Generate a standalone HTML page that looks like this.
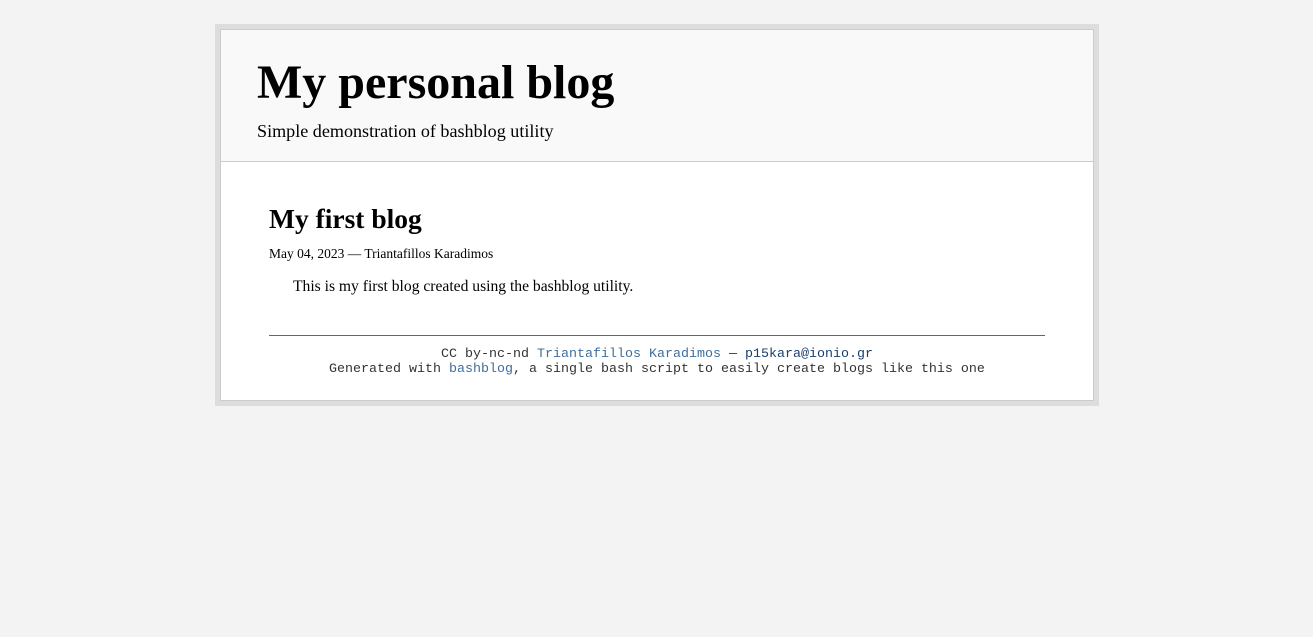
<!DOCTYPE html>
<html><head><style>
html,body{margin:0;padding:0;background:#f3f3f3;}
body{font-family:"Liberation Serif",serif;}
#outer{position:absolute;left:215px;top:24px;width:874px;height:372px;border:5px solid #ddd;background:#fff;}
#inner{position:absolute;left:0;top:0;width:872px;height:370px;border:1px solid #ccc;}
#hdr{height:131px;background:#f9f9f9;border-bottom:1px solid #ccc;position:relative;}
h1{position:absolute;left:36px;top:25px;margin:0;font-size:48px;font-weight:bold;line-height:56px;}
.sub{position:absolute;left:36px;top:89px;font-size:18.1px;line-height:24px;}
h3{position:absolute;left:48px;top:171px;margin:0;font-size:27.5px;line-height:36px;font-weight:bold;}
.meta{position:absolute;left:48px;top:215px;font-size:13.5px;line-height:18px;}
.body{position:absolute;left:72px;top:246px;font-size:15.6px;line-height:22px;}
.hr{position:absolute;left:48px;top:305px;width:776px;border-top:1px solid #666;}
.foot{position:absolute;left:0;width:872px;top:317px;text-align:center;font-family:"Liberation Mono",monospace;font-size:13.33px;line-height:15px;color:#333;}
.foot a{color:#3e6e9e;text-decoration:none}
.foot a.m{color:#1a3f6e}
</style></head><body>
<div id="outer"><div id="inner">
<div id="hdr"><h1>My personal blog</h1><div class="sub">Simple demonstration of bashblog utility</div></div>
<h3>My first blog</h3>
<div class="meta">May 04, 2023 — Triantafillos Karadimos</div>
<div class="body">This is my first blog created using the bashblog utility.</div>
<div class="hr"></div>
<div class="foot">CC by-nc-nd <a>Triantafillos Karadimos</a> — <a class="m">p15kara@ionio.gr</a><br>Generated with <a>bashblog</a>, a single bash script to easily create blogs like this one</div>
</div></div>
</body></html>
